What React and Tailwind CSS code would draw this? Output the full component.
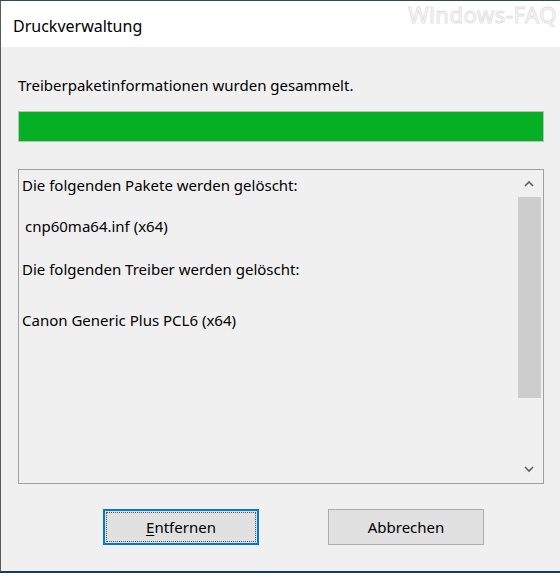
import React from 'react';

const font = { fontFamily: '"Noto Sans", "Open Sans", sans-serif' };

const ScrollArrow = ({ up }) => (
  <svg width="10" height="7" viewBox="0 0 10 7" className="block">
    <path
      d={up ? 'M1 6 L5 2 L9 6' : 'M1 1 L5 5 L9 1'}
      fill="none"
      stroke="#606060"
      strokeWidth="1.6"
    />
  </svg>
);

const App = () => {
  return (
    <div
      className="w-[560px] h-[573px] bg-[#f0f0f0] flex flex-col border-t border-[#2d4b5f] border-b-2 border-b-[#1d3a50] border-l border-l-[#5a5a5a] text-[#000] text-[15px] overflow-hidden"
      style={font}
    >
      {/* Titelleiste */}
      <div className="h-[46px] bg-white flex items-center justify-between pl-[12px] pr-[3px] shrink-0">
        <span className="text-[16px] mt-[4px]">Druckverwaltung</span>
        <span className="self-start mt-[-1px] text-[22px] leading-[28px] tracking-wide text-transparent [-webkit-text-stroke:1px_#e2e2e2] select-none">
          Windows-FAQ
        </span>
      </div>

      <div className="flex flex-col pl-[17px] pr-[16px] pt-[28px]">
        <p className="leading-[20px]">Treiberpaketinformationen wurden gesammelt.</p>

        {/* Fortschritt */}
        <div className="mt-[16px] h-[31px] border border-[#bcbcbc] bg-[#e6e6e6]">
          <div className="h-full w-full bg-[#06b025]" />
        </div>

        {/* Liste */}
        <div className="mt-[27px] h-[315px] border border-[#a0a0a0] flex">
          <div className="flex-1 pl-[3px] pt-[5px]">
            <p className="leading-[20px]">Die folgenden Pakete werden gelöscht:</p>
            <p className="leading-[20px] mt-[21px] pl-[3px]">cnp60ma64.inf (x64)</p>
            <p className="leading-[20px] mt-[23px]">Die folgenden Treiber werden gelöscht:</p>
            <p className="leading-[20px] mt-[31px]">Canon Generic Plus PCL6 (x64)</p>
          </div>
          <div className="w-[26px] flex flex-col items-center pr-[2px]">
            <div className="h-[27px] flex items-center justify-center">
              <ScrollArrow up />
            </div>
            <div className="w-[23px] h-[201px] bg-[#cdcdcd]" />
            <div className="flex-1" />
            <div className="h-[27px] flex items-center justify-center">
              <ScrollArrow />
            </div>
          </div>
        </div>

        {/* Schaltflächen */}
        <div className="mt-[25px] flex">
          <button className="ml-[85px] w-[156px] h-[36px] border-2 border-[#0078d7] bg-[#e1e1e1] p-[1px]">
            <span className="h-full w-full flex items-center justify-center border border-dotted border-[#555]">
              <span>
                <span className="underline underline-offset-2">E</span>ntfernen
              </span>
            </span>
          </button>
          <button className="ml-[69px] w-[156px] h-[36px] border border-[#adadad] bg-[#e1e1e1]">
            Abbrechen
          </button>
        </div>
      </div>
    </div>
  );
};

export default App;
